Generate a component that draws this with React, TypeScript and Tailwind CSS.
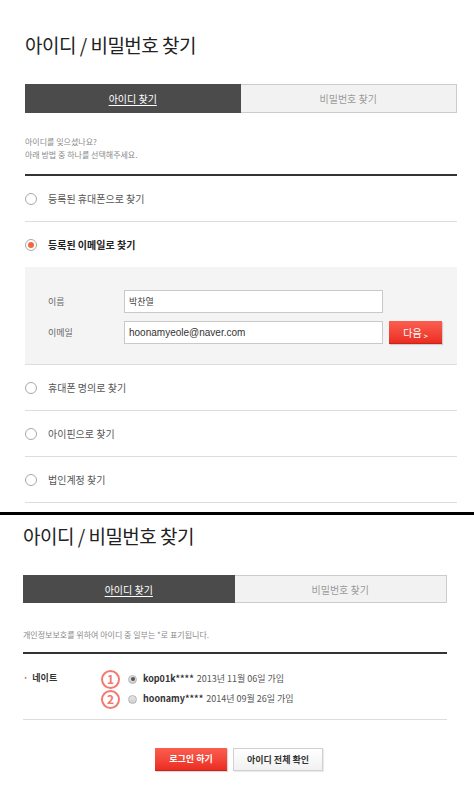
const KR = { fontFamily: '"Noto Sans CJK KR", "Noto Sans", sans-serif' };

function Tabs({ h }: { h: string }) {
  return (
    <div className={`flex ${h} text-[10px]`}>
      <div className="flex flex-1 items-center justify-center bg-[#4b4b4b] text-white">
        <span className="underline underline-offset-2">아이디 찾기</span>
      </div>
      <div className="flex flex-1 items-center justify-center border border-l-0 border-[#cccccc] bg-[#f2f2f2] text-[#9a9a9a]">
        비밀번호 찾기
      </div>
    </div>
  );
}

function Radio({ checked }: { checked?: boolean }) {
  return (
    <span className="flex h-[12px] w-[12px] shrink-0 items-center justify-center rounded-full border border-[#a8a8a8] bg-white">
      {checked && <span className="h-[6px] w-[6px] rounded-full bg-[#f4663d]" />}
    </span>
  );
}

function OptionRow({ label }: { label: string }) {
  return (
    <div className="flex h-[46px] items-center gap-[11px] border-b border-[#dddddd]">
      <Radio />
      <span className="text-[10px] text-[#555]">{label}</span>
    </div>
  );
}

function SmallRadio({ checked }: { checked?: boolean }) {
  return (
    <span className="flex h-[9px] w-[9px] shrink-0 items-center justify-center rounded-full border border-[#b5b5b5] bg-gradient-to-b from-[#e6e6e6] to-[#cfcfcf]">
      {checked && <span className="h-[4px] w-[4px] rounded-full bg-[#555]" />}
    </span>
  );
}

export default function App() {
  return (
    <div className="w-[474px] min-h-[801px] bg-white" style={KR}>
      {/* 첫 화면: 찾기 방법 선택 */}
      <section className="pl-[25px] pr-[17px] pt-[33px]">
        <h1 className="text-[19px] leading-[24px] tracking-[-0.5px] text-[#222]">아이디 / 비밀번호 찾기</h1>
        <div className="mt-[27px]">
          <Tabs h="h-[29px]" />
        </div>
        <p className="mt-[22px] text-[8px] leading-[13px] text-[#8a8a8a]">
          아이디를 잊으셨나요?
          <br />
          아래 방법 중 하나를 선택해주세요.
        </p>
        <div className="mt-[13px] h-[2px] bg-[#333]" />

        <OptionRow label="등록된 휴대폰으로 찾기" />
        <div className="flex h-[45px] items-center gap-[11px]">
          <Radio checked />
          <span className="text-[10px] font-bold text-[#222]">등록된 이메일로 찾기</span>
        </div>
        <div className="border-b border-[#dddddd] bg-[#f4f4f4] pb-[20px] pl-[23px] pt-[23px] text-[9px]">
          <div className="flex items-center">
            <span className="w-[76px] text-[#666]">이름</span>
            <div className="flex h-[23px] w-[259px] items-center border border-[#c9c9c9] bg-white px-[4px] text-[#444]">
              박찬열
            </div>
          </div>
          <div className="mt-[8px] flex items-center">
            <span className="w-[76px] text-[#666]">이메일</span>
            <div
              className="flex h-[23px] w-[259px] items-center border border-[#c9c9c9] bg-white px-[4px] text-[10px] text-[#333]"
              style={{ fontFamily: '"Liberation Sans", sans-serif' }}
            >
              hoonamyeole@naver.com
            </div>
            <button className="ml-[6px] flex h-[23px] w-[53px] items-center justify-center border-b border-[#c9241b] bg-gradient-to-b from-[#fb5d4f] to-[#ea2c20] text-[10px] text-white shadow-[1px_1px_1px_rgba(0,0,0,0.15)]">
              다음
              <span className="ml-[2px] translate-y-[4px] text-[7px] font-bold">&gt;</span>
            </button>
          </div>
        </div>
        <OptionRow label="휴대폰 명의로 찾기" />
        <OptionRow label="아이핀으로 찾기" />
        <OptionRow label="법인계정 찾기" />
      </section>

      <div className="mt-[9px] h-[3px] bg-black" />

      {/* 두번째 화면: 아이디 결과 */}
      <section className="pl-[23px] pr-[27px] pt-[9px]">
        <h1 className="text-[19px] leading-[24px] tracking-[-0.5px] text-[#222]">아이디 / 비밀번호 찾기</h1>
        <div className="mt-[27px]">
          <Tabs h="h-[28px]" />
        </div>
        <p className="mt-[25px] text-[8px] leading-[13px] text-[#8a8a8a]">
          개인정보보호를 위하여 아이디 중 일부는 *로 표기됩니다.
        </p>
        <div className="mt-[11px] h-[2px] bg-[#333]" />

        <div className="flex border-b border-[#dddddd] pb-[10px] pt-[15px]">
          <div className="flex w-[78px] items-center self-start pt-[2px] text-[9px] font-bold text-[#333]">
            <span className="mr-[4px] text-[#f05a2a]">·</span>
            네이트
          </div>
          <div className="flex flex-col text-[9px]">
            {[
              { n: "1", id: "kop01k****", date: "2013년 11월 06일 가입", checked: true },
              { n: "2", id: "hoonamy****", date: "2014년 09월 26일 가입" },
            ].map((r) => (
              <div key={r.id} className="flex h-[20px] items-center">
                <span className="flex h-[19px] w-[19px] items-center justify-center rounded-full border-2 border-[#f27a70] text-[12px] font-bold leading-none text-[#f27a70]">
                  {r.n}
                </span>
                <span className="ml-[8px]">
                  <SmallRadio checked={r.checked} />
                </span>
                <span className="ml-[6px] font-bold text-[#333]">{r.id}</span>
                <span className="ml-[3px] text-[#555]">{r.date}</span>
              </div>
            ))}
          </div>
        </div>

        <div className="mt-[28px] flex justify-center gap-[6px] pl-[8px] text-[9px] font-bold">
          <button className="h-[23px] w-[72px] border-b border-[#c9241b] bg-gradient-to-b from-[#fb5d4f] to-[#ea2c20] text-white shadow-[1px_1px_1px_rgba(0,0,0,0.15)]">
            로그인 하기
          </button>
          <button className="h-[23px] w-[90px] border border-[#d0d0d0] bg-gradient-to-b from-white to-[#f1f1f1] text-[#333] shadow-[1px_1px_1px_rgba(0,0,0,0.08)]">
            아이디 전체 확인
          </button>
        </div>
      </section>
    </div>
  );
}
